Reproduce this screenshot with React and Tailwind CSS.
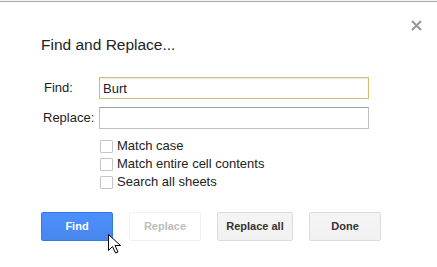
import { useState } from 'react'

function Checkbox({ label }) {
  return (
    <label className="flex items-center gap-[4px] h-[18px]">
      <span className="block w-[13px] h-[13px] border border-[#c6c6c6] bg-white rounded-[1px]" />
      <span className="text-[13px] text-[#222]">{label}</span>
    </label>
  )
}

export default function App() {
  const [find, setFind] = useState('Burt')
  const [replace, setReplace] = useState('')

  return (
    <div
      className="relative w-[437px] h-[267px] bg-white overflow-hidden"
      style={{ fontFamily: '"Liberation Sans", Arial, sans-serif' }}
    >
      <div className="h-[1px] bg-[#f4f4f4]" />
      <div className="h-[1px] bg-[#a9a9a9]" />

      <button className="absolute left-[409px] top-[18px] w-[14px] h-[14px] flex items-center justify-center text-[#9a9a9a]">
        <svg width="11" height="11" viewBox="0 0 11 11">
          <path d="M1 1L10 10M10 1L1 10" stroke="#999" strokeWidth="2.2" />
        </svg>
      </button>

      <div className="pl-[41px] pt-[33px]">
        <h1 className="text-[15.5px] leading-[20px] text-[#222]">Find and Replace...</h1>

        <div className="mt-[22px] flex flex-col gap-[8px]">
          <div className="flex items-center">
            <span className="w-[58px] pl-[3px] text-[13px] text-[#222]">Find:</span>
            <input
              value={find}
              onChange={(e) => setFind(e.target.value)}
              className="w-[270px] h-[22px] border border-[#d3bf6e] px-[3px] text-[13px] text-[#222] outline-none shadow-[inset_0_1px_2px_rgba(0,0,0,0.1)]"
            />
          </div>
          <div className="flex items-center">
            <span className="w-[58px] pl-[2px] text-[13px] text-[#222]">Replace:</span>
            <input
              value={replace}
              onChange={(e) => setReplace(e.target.value)}
              className="w-[270px] h-[22px] border border-[#c0c0c0] border-t-[#a0a0a0] px-[3px] text-[13px] outline-none"
            />
          </div>
        </div>

        <div className="mt-[8px] ml-[59px] flex flex-col">
          <Checkbox label="Match case" />
          <Checkbox label="Match entire cell contents" />
          <Checkbox label="Search all sheets" />
        </div>

        <div className="mt-[21px] flex gap-[16px]">
          <button className="w-[72px] h-[29px] rounded-[2px] border border-[#3079ed] bg-gradient-to-b from-[#4d90fe] to-[#4787ed] text-white text-[11px] font-bold">
            Find
          </button>
          <button className="w-[72px] h-[29px] rounded-[2px] border border-[#f0f0f0] bg-white text-[#bdbdbd] text-[11px] font-bold">
            Replace
          </button>
          <button className="w-[76px] h-[29px] rounded-[2px] border border-[#dcdcdc] bg-gradient-to-b from-[#f5f5f5] to-[#f1f1f1] text-[#333] text-[11px] font-bold">
            Replace all
          </button>
          <button className="w-[72px] h-[29px] rounded-[2px] border border-[#dcdcdc] bg-gradient-to-b from-[#f5f5f5] to-[#f1f1f1] text-[#333] text-[11px] font-bold">
            Done
          </button>
        </div>
      </div>

      <svg className="absolute left-[108px] top-[234px]" width="13" height="20" viewBox="0 0 13 20">
        <path d="M0.5 0.5V16.5L4.5 12.5L7.5 19L10 18L7 11.5H12.5Z" fill="#fff" stroke="#000" strokeWidth="1" strokeLinejoin="round" />
      </svg>
    </div>
  )
}
